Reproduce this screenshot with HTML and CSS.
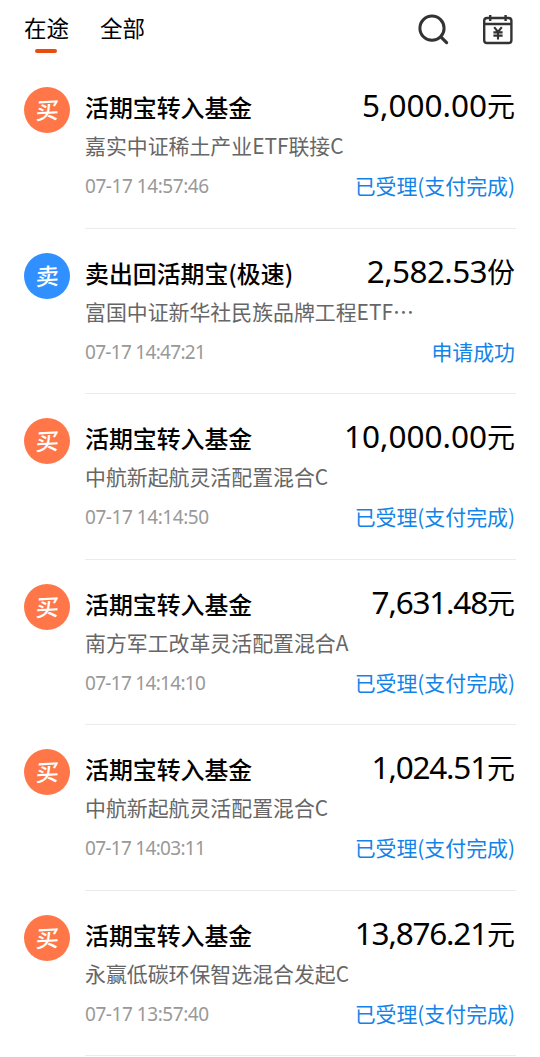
FILE: index.html
```html
<!DOCTYPE html>
<html lang="zh-CN">
<head>
    <meta charset="UTF-8">
    <meta name="viewport" content="width=device-width, initial-scale=1.0">
    <title>交易记录</title>
    <link rel="stylesheet" href="styles.css">
</head>
<body>

    <header class="header">
        <nav class="tabs">
            <a class="tab active">在途</a>
            <a class="tab">全部</a>
        </nav>
        <div class="actions">
            <svg class="icon" width="32" height="32" viewBox="0 0 32 32" fill="none" stroke="#333" stroke-width="3">
                <circle cx="14" cy="14.2" r="12.1"/>
                <path d="M22.8 22.8l5.8 5.8" stroke-width="3.2" stroke-linecap="round"/>
            </svg>
            <svg class="icon" width="32" height="32" viewBox="0 0 32 32" fill="none" stroke="#333" stroke-width="2.4">
                <rect x="2.2" y="4" width="27.2" height="25" rx="2.8"/>
                <path d="M2.2 10h27.2M8.2 1v6M23.6 1v6"/>
                <path d="M12.2 13.2l3.8 4.8 3.8-4.8M11.4 18.4h9.2M11.4 21.6h9.2M16 18v7.4" stroke-width="2.1"/>
            </svg>
        </div>
    </header>

    <main class="list">
        <div class="item">
            <div class="badge buy"><span>买</span></div>
            <div class="content">
                <div class="row">
                    <div class="title">活期宝转入基金</div>
                    <div class="amount wide">5,000.00<span>元</span></div>
                </div>
                <div class="fund">嘉实中证稀土产业ETF联接C</div>
                <div class="row">
                    <div class="time">07-17 14:57:46</div>
                    <div class="status">已受理(支付完成)</div>
                </div>
            </div>
        </div>

        <div class="item">
            <div class="badge sell"><span>卖</span></div>
            <div class="content">
                <div class="row">
                    <div class="title">卖出回活期宝(极速)</div>
                    <div class="amount">2,582.53<span>份</span></div>
                </div>
                <div class="fund">富国中证新华社民族品牌工程ETF⋯</div>
                <div class="row">
                    <div class="time tight">07-17 14:47:21</div>
                    <div class="status">申请成功</div>
                </div>
            </div>
        </div>

        <div class="item">
            <div class="badge buy"><span>买</span></div>
            <div class="content">
                <div class="row">
                    <div class="title">活期宝转入基金</div>
                    <div class="amount wide">10,000.00<span>元</span></div>
                </div>
                <div class="fund">中航新起航灵活配置混合C</div>
                <div class="row">
                    <div class="time">07-17 14:14:50</div>
                    <div class="status">已受理(支付完成)</div>
                </div>
            </div>
        </div>

        <div class="item">
            <div class="badge buy"><span>买</span></div>
            <div class="content">
                <div class="row">
                    <div class="title">活期宝转入基金</div>
                    <div class="amount tight">7,631.48<span>元</span></div>
                </div>
                <div class="fund">南方军工改革灵活配置混合A</div>
                <div class="row">
                    <div class="time tight">07-17 14:14:10</div>
                    <div class="status">已受理(支付完成)</div>
                </div>
            </div>
        </div>

        <div class="item">
            <div class="badge buy"><span>买</span></div>
            <div class="content">
                <div class="row">
                    <div class="title">活期宝转入基金</div>
                    <div class="amount tight">1,024.51<span>元</span></div>
                </div>
                <div class="fund">中航新起航灵活配置混合C</div>
                <div class="row">
                    <div class="time tight">07-17 14:03:11</div>
                    <div class="status">已受理(支付完成)</div>
                </div>
            </div>
        </div>

        <div class="item">
            <div class="badge buy"><span>买</span></div>
            <div class="content">
                <div class="row">
                    <div class="title">活期宝转入基金</div>
                    <div class="amount tight">13,876.21<span>元</span></div>
                </div>
                <div class="fund">永赢低碳环保智选混合发起C</div>
                <div class="row">
                    <div class="time">07-17 13:57:40</div>
                    <div class="status">已受理(支付完成)</div>
                </div>
            </div>
        </div>
    </main>

</body>
</html>
```
FILE: styles.css
```css
* {
    box-sizing: border-box;
}
body {
    margin: 0;
    background-color: #fff;
    color: #000;
    font-family: "Noto Sans CJK SC", sans-serif;
    overflow: hidden;
}
.header {
    display: flex;
    justify-content: space-between;
    height: 63px;
    padding: 12px 26px 0 24px;
}
.tabs {
    display: flex;
    gap: 31px;
}
.tab {
    display: flex;
    flex-direction: column;
    align-items: center;
    font-size: 22.5px;
    line-height: 30px;
}
.tab.active::after {
    content: "";
    width: 22px;
    height: 4px;
    margin: 7px 2px 0 0;
    border-radius: 2px;
    background-color: #e84c12;
}
.actions {
    display: flex;
    gap: 32px;
}
.icon {
    margin-top: 2px;
}
.item {
    display: flex;
    height: 165.5px;
    padding: 0 24px;
}
.badge {
    display: flex;
    justify-content: center;
    align-items: center;
    width: 46px;
    height: 46px;
    margin: 24px 15px 0 0;
    border-radius: 50%;
    color: #fff;
    font-size: 23px;
    line-height: 46px;
    font-weight: 500;
}
.badge span {
    transform: translateY(-1px) skew(-3deg, -3deg);
}
.buy {
    background-color: #ff7748;
}
.sell {
    background-color: #3190ff;
}
.content {
    flex: 1;
    padding-top: 22px;
    border-bottom: 1px solid #ebebeb;
    white-space: nowrap;
}
.row {
    display: flex;
    justify-content: space-between;
    align-items: center;
}
.title {
    height: 40px;
    font-size: 23.9px;
    line-height: 43px;
    font-weight: 500;
}
.amount {
    height: 40px;
    margin-right: 1px;
    font-family: "Noto Sans", "Noto Sans CJK SC", sans-serif;
    font-size: 31.5px;
    line-height: 40px;
    letter-spacing: -0.6px;
}
.amount.wide {
    letter-spacing: 0;
}
.amount.tight {
    letter-spacing: -1.2px;
}
.amount span {
    font-size: 28px;
    letter-spacing: 0;
}
.fund {
    height: 38px;
    color: #666;
    font-size: 20.9px;
    line-height: 41px;
}
.time {
    color: #999;
    font-family: "Noto Sans", sans-serif;
    font-size: 19px;
    line-height: 42px;
    letter-spacing: -0.45px;
    padding-top: 2px;
}
.time.tight {
    letter-spacing: -0.7px;
}
.status {
    margin-right: 1px;
    color: #1283e8;
    font-size: 20.9px;
    line-height: 42px;
}
```
